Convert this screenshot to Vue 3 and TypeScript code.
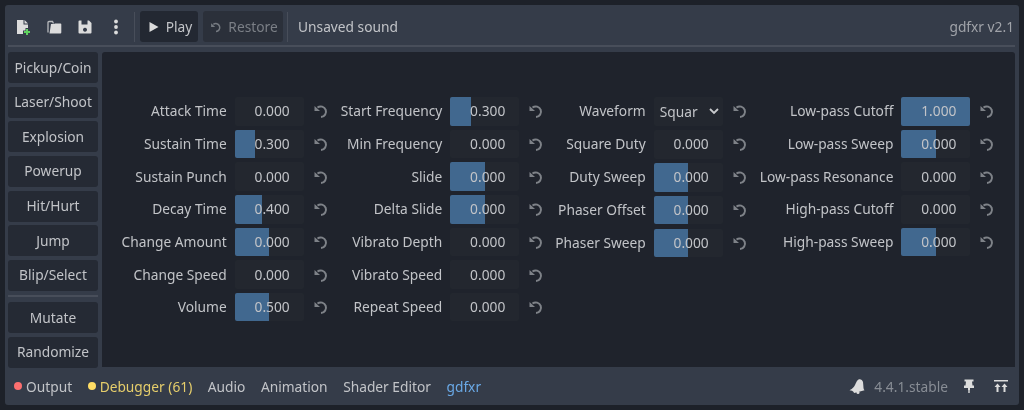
<script setup lang="ts">
interface Row { label: string; value: string; fill: number; select?: boolean }
const r = (label: string, value = '0.000', fill = 0): Row => ({ label, value, fill })
const columns: Row[][] = [
  [r('Attack Time'), r('Sustain Time', '0.300', 0.3), r('Sustain Punch'), r('Decay Time', '0.400', 0.4), r('Change Amount', '0.000', 0.5), r('Change Speed'), r('Volume', '0.500', 0.5)],
  [r('Start Frequency', '0.300', 0.3), r('Min Frequency'), r('Slide', '0.000', 0.5), r('Delta Slide', '0.000', 0.5), r('Vibrato Depth'), r('Vibrato Speed'), r('Repeat Speed')],
  [{ label: 'Waveform', value: 'Squar', fill: 0, select: true }, r('Square Duty'), r('Duty Sweep', '0.000', 0.5), r('Phaser Offset', '0.000', 0.5), r('Phaser Sweep', '0.000', 0.5)],
  [r('Low-pass Cutoff', '1.000', 1), r('Low-pass Sweep', '0.000', 0.5), r('Low-pass Resonance'), r('High-pass Cutoff'), r('High-pass Sweep', '0.000', 0.5)],
]
const presets = ['Pickup/Coin', 'Laser/Shoot', 'Explosion', 'Powerup', 'Hit/Hurt', 'Jump', 'Blip/Select']
</script>

<template>
  <div class="frame">
    <div class="editor">
      <header class="toolbar">
        <div class="tools">
          <svg class="ic" viewBox="0 0 16 16"><path fill="#dcdcdc" d="M2 1h6.500v4.500H13V9h-2.500v2.500H8V15H2z" /><path fill="#dcdcdc" d="M9.500 1L13 4.500H9.500z" /><path fill="#5fd35f" d="M11 10h2v2h2v2h-2v2h-2v-2H9v-2h2z" /></svg>
          <svg class="ic" viewBox="0 0 16 16"><path fill="none" stroke="#b8babd" stroke-width="1.300" d="M2 13.500V3.500a1 1 0 0 1 1-1h3.500l1 2" /><path fill="#dcdcdc" d="M3.500 14.500L5 5h3l1-.5h5.500a.8.8 0 0 1 .8.8V13.500a1 1 0 0 1-1 1z" /></svg>
          <svg class="ic" viewBox="0 0 16 16"><path fill="#dcdcdc" fill-rule="evenodd" d="M2.500 1.500h9.500l2.500 2.500v9.500a1 1 0 0 1-1 1h-11a1 1 0 0 1-1-1v-11a1 1 0 0 1 1-1zM4.500 1.500v4h6v-4zM8 8.800a2 2 0 1 0 .01 0z" /></svg>
          <svg class="ic" viewBox="0 0 16 16"><circle cx="8" cy="2.500" r="1.900" fill="#dcdcdc" /><circle cx="8" cy="8" r="1.900" fill="#dcdcdc" /><circle cx="8" cy="13.500" r="1.900" fill="#dcdcdc" /></svg>
        </div>
        <span class="vsep first"></span>
        <button class="tbtn play"><svg class="sm" viewBox="0 0 12 12"><path fill="#dcdcdc" d="M1.500 1l9 5-9 5z" /></svg>Play</button>
        <button class="tbtn restore">
          <svg class="sm" viewBox="0 0 16 16"><path fill="none" stroke="#757a81" stroke-width="2" d="M4.500 4.500A5.300 5.300 0 1 1 8 14" /><path fill="#757a81" d="M1.500 3l5.500 5H1.500z" /></svg>Restore
        </button>
        <span class="vsep"></span>
        <span class="title">Unsaved sound</span>
        <span class="version">gdfxr v2.1</span>
      </header>
      <div class="hsep"></div>
      <div class="body">
        <aside class="side">
          <button v-for="p in presets" :key="p" class="preset">{{ p }}</button>
          <div class="side-sep"></div>
          <button class="preset">Mutate</button>
          <button class="preset">Randomize</button>
        </aside>
        <main class="content">
          <div class="columns">
            <div v-for="(col, i) in columns" :key="i" class="col" :class="{ tight: i === 2 }">
              <template v-for="row in col" :key="row.label">
                <span class="label">{{ row.label }}</span>
                <div v-if="row.select" class="spin select">
                  <span>{{ row.value }}</span>
                  <svg class="chev" viewBox="0 0 12 12"><path fill="none" stroke="#c8cacd" stroke-width="1.800" d="M2 4l4 4 4-4" /></svg>
                </div>
                <div v-else class="spin">
                  <div class="fill" :style="{ width: row.fill * 100 + '%' }"></div>
                  <span class="val">{{ row.value }}</span>
                </div>
                <svg class="reset" viewBox="0 0 16 16"><path fill="none" stroke="#7e8288" stroke-width="2" d="M4.500 4.500A5.300 5.300 0 1 1 8 14" /><path fill="#7e8288" d="M1.500 3l5.500 5H1.500z" /></svg>
              </template>
            </div>
          </div>
        </main>
      </div>
      <footer class="bottom">
        <span class="tab"><i class="dot red"></i>Output</span>
        <span class="tab yellow"><i class="dot yel"></i>Debugger (61)</span>
        <span class="tab">Audio</span>
        <span class="tab">Animation</span>
        <span class="tab">Shader Editor</span>
        <span class="tab blue">gdfxr</span>
        <span class="spacer"></span>
        <svg class="bell" viewBox="0 0 16 16"><path fill="#dcdcdc" d="M9.500 1.500c2-.8 4 .5 4.500 2.500.4 2 .2 4 .5 6 .1 1 .4 1.700 1 2.300L11 13.500 5 15c-.2-1-.9-1.700-2-2.300-.7-.3-1.500-.5-2.500-.5 1.500-.8 3-1.800 4-3C6.500 7.500 7 3 9.500 1.500z" /><circle cx="9" cy="14.500" r="1.500" fill="#dcdcdc" /></svg>
        <span class="ver">4.4.1.stable</span>
        <svg class="pin" viewBox="0 0 16 16"><path fill="#dcdcdc" d="M3.500 1.500h9v2H11l.5 4h1.500v2.500H9v2H7v-2H3V7.500h1.500L5 3.500H3.500zM7.300 12h1.400v3H7.300z" /></svg>
        <svg class="collapse" viewBox="0 0 16 16"><path fill="#dcdcdc" d="M1 2h14v1.500H1zM4.500 5.500L7.500 9H5.500v5h-2V9h-2zM11.500 5.500l3 3.500h-2v5h-2V9h-2z" /></svg>
      </footer>
    </div>
  </div>
</template>

<style>
html, body { margin: 0; background: #1d2129; }
</style>

<style scoped>
.frame {
  width: 1024px;
  height: 410px;
  box-sizing: border-box;
  padding: 5px;
  background: #1d2129;
  font-family: "Noto Sans", sans-serif;
  font-size: 13.750px;
  color: #c2c4c8;
  overflow: hidden;
  filter: blur(0.3px);
}
.editor {
  height: 100%;
  background: #353c49;
  border-radius: 3px;
  display: flex;
  flex-direction: column;
}
.toolbar {
  height: 31px;
  margin-top: 6px;
  display: flex;
  align-items: center;
  padding: 0 3px;
  flex: none;
}
.tools { display: flex; align-items: center; width: 125px; padding-left: 7px; box-sizing: border-box; }
.ic { width: 16px; height: 16px; margin-right: 15px; flex: none; }
.vsep { width: 1px; height: 30px; background: #484e5a; margin: 0 5px 0 0; }
.vsep.first { margin-left: 1px; }
button { font: inherit; border: 0; color: inherit; padding: 0; }
.tbtn {
  height: 31px;
  border-radius: 3px;
  display: flex;
  align-items: center;
  justify-content: center;
  gap: 6px;
  margin-right: 5px;
  padding-left: 2px;
  box-sizing: border-box;
}
.play { width: 58px; background: #232832; }
.restore { width: 80px; background: #2b303a; color: #7b7f86; margin-right: 4px; }
.sm { width: 12px; height: 12px; }
.title { margin-left: 5px; }
.version { margin-left: auto; margin-right: 2px; color: #a0a3a9; }
.hsep { height: 2px; background: #484e5a; margin: 3px 4px 5px 3px; flex: none; }
.body { flex: none; height: 315px; display: flex; padding: 0 4px 0 3px; gap: 4px; }
.side { width: 90px; display: flex; flex-direction: column; gap: 3.670px; flex: none; }
.preset {
  height: 31px;
  flex: none;
  background: #252a34;
  border-radius: 3px;
  width: 100%;
  padding-bottom: 1px;
  box-sizing: border-box;
}
.side-sep { height: 2px; background: #484e5a; margin: 0.500px 0 1.500px; flex: none; }
.content {
  flex: 1;
  background: #1f232c;
  border-radius: 3px 3px 0 0;
  display: flex;
  align-items: center;
  justify-content: center;
  padding-left: 1px;
}
.columns { display: flex; align-items: flex-start; gap: 11px; height: 225px; }
.col:nth-child(3) { margin-left: -1px; }
.col {
  display: grid;
  grid-template-columns: auto 69px 18px;
  column-gap: 8px;
  row-gap: 4px;
  grid-auto-rows: 28.650px;
  align-items: center;
  justify-items: end;
}
.col.tight { row-gap: 4.300px; }
.label { white-space: nowrap; padding-bottom: 1px; }
.spin {
  position: relative;
  width: 69px;
  height: 100%;
  background: #23272f;
  border-radius: 2px;
  overflow: hidden;
  display: flex;
  align-items: center;
  justify-content: flex-end;
  box-sizing: border-box;
  padding: 0 14px 1px 0;
}
.select { justify-content: space-between; padding: 0 3px 0 6px; }
.chev { width: 12px; height: 12px; }
.fill { position: absolute; left: 0; top: 0; bottom: 0; background: #41688f; }
.val { position: relative; }
.reset { width: 16px; height: 16px; justify-self: center; }
.bottom {
  height: 38px;
  flex: none;
  display: flex;
  align-items: center;
  gap: 15.500px;
  padding: 0 10px 0 9px;
}
.tab { display: flex; align-items: center; gap: 4px; white-space: nowrap; }
.dot { width: 8px; height: 8px; border-radius: 50%; display: block; }
.red { background: #fc6f6f; }
.yel { background: #ffdd65; }
.yellow { color: #e5cd6b; }
.blue { color: #6aa9e6; }
.spacer { flex: 1; }
.bell { width: 16px; height: 16px; margin-right: -6.500px; }
.ver { color: #888d95; }
.pin { width: 16px; height: 16px; margin-left: -2.500px; }
.collapse { width: 16px; height: 16px; margin-left: 0.500px; }
</style>
